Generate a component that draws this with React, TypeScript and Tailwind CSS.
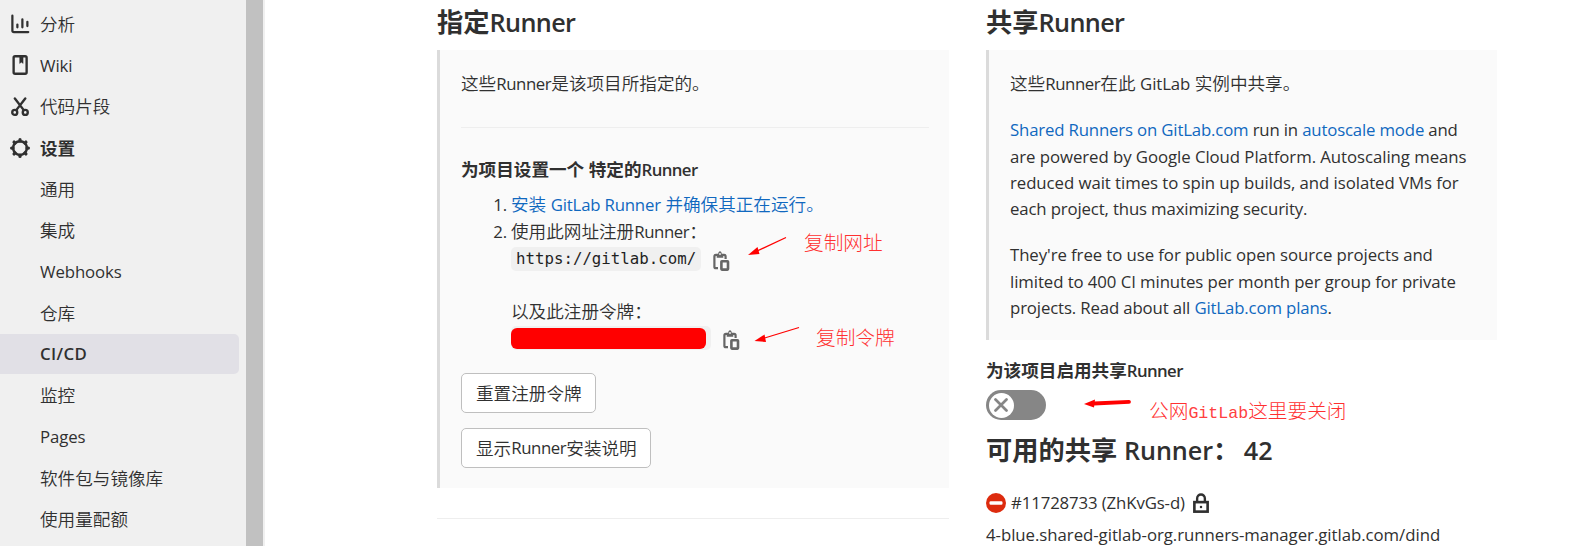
import React from 'react';

type Props = { children?: React.ReactNode; className?: string };

function Latin({ children, className = 'font-normal tracking-[-0.12px]' }: Props) {
  return <span className={`text-[16.8px] ${className}`}>{children}</span>;
}

function Link({ children }: Props) {
  return (
    <a href="#" className="text-[#1068bf]">
      {children}
    </a>
  );
}

function ChartIcon() {
  return (
    <svg viewBox="0 0 16 16" className="size-5" fill="none" stroke="currentColor" strokeWidth="1.8" strokeLinecap="round">
      <path d="M1.9 1.3v11.8a1.3 1.3 0 0 0 1.3 1.3h11.4" />
      <path d="M5.9 8.4v2.2M9.9 4.3v6.3M13.9 6.2v3.4" />
    </svg>
  );
}

function WikiIcon() {
  return (
    <svg viewBox="0 0 16 16" className="size-5" fill="none" stroke="currentColor" strokeWidth="1.9">
      <rect x="2.9" y="1" width="10.4" height="14" rx="1.2" />
      <path d="M7.7 1v5.8l1.4-1.1 1.4 1.1V1" fill="currentColor" strokeWidth="0.3" />
    </svg>
  );
}

function ScissorsIcon() {
  return (
    <svg viewBox="0 0 16 16" className="size-5" fill="none" stroke="currentColor" strokeWidth="1.9" strokeLinecap="round">
      <circle cx="3.8" cy="12.3" r="2" />
      <circle cx="12.2" cy="12.3" r="2" />
      <path d="M3.9 1.2 11 10.5M12.2 1.2 5 10.5" />
    </svg>
  );
}

const teeth = [0, 45, 90, 135, 180, 225, 270, 315];

function GearIcon() {
  return (
    <svg viewBox="0 0 16 16" className="size-5" fill="none" stroke="currentColor">
      <circle cx="8" cy="8" r="5.5" strokeWidth="2" />
      {teeth.map((a) => (
        <path key={a} d="M8 2.4V1.3" strokeWidth="2.6" strokeLinecap="round" transform={`rotate(${a} 8 8)`} />
      ))}
    </svg>
  );
}

function CopyIcon() {
  return (
    <svg viewBox="0 0 20 20" className="size-5" fill="none" stroke="#666" strokeWidth="2.2">
      <path d="M7 17.2H4.9a1.5 1.5 0 0 1-1.500-1.500V5.400A1.500 1.500 0 0 1 4.900 3.900h8.200a1.500 1.500 0 0 1 1.500 1.500V8" />
      <path d="M5.700 3h1.500C7.400 1.300 8 0.300 9 0.300s1.600 1 1.800 2.700h1.500v3.700H5.700z" fill="#666" stroke="none" />
      <circle cx="9" cy="3" r="0.900" fill="#fafafa" stroke="none" />
      <rect x="10.400" y="10.200" width="6.600" height="8.400" rx="0.500" strokeWidth="2.600" />
    </svg>
  );
}

function LockIcon() {
  return (
    <svg viewBox="0 0 16 16" className="size-5" fill="none" stroke="currentColor" strokeWidth="2.1">
      <rect x="2.7" y="7.3" width="10.6" height="7.6" />
      <path d="M4.900 7V4.300a3.100 3.100 0 0 1 6.200 0V7" strokeWidth="1.9" />
      <circle cx="8" cy="11.1" r="1" fill="currentColor" stroke="none" />
    </svg>
  );
}

const menu = [
  { label: '分析', Icon: ChartIcon },
  { label: 'Wiki', Icon: WikiIcon, latin: true },
  { label: '代码片段', Icon: ScissorsIcon },
  { label: '设置', Icon: GearIcon, bold: true },
  { label: '通用' },
  { label: '集成' },
  { label: 'Webhooks', latin: true },
  { label: '仓库' },
  { label: 'CI/CD', latin: true, active: true },
  { label: '监控' },
  { label: 'Pages', latin: true },
  { label: '软件包与镜像库' },
  { label: '使用量配额' },
];

function Sidebar() {
  return (
    <aside className="flex w-[265px] shrink-0 bg-[#f0f0f0]">
      <nav className="flex w-[246px] flex-col gap-[1.25px] pt-1 pr-[7px]">
        {menu.map(({ label, Icon, latin, bold, active }) => (
          <div
            key={label}
            className={`flex h-10 shrink-0 items-center pl-[10px] ${active ? 'rounded-r-[5px] bg-[#e1e0e6]' : ''} ${bold ? 'font-bold' : ''}`}
          >
            <span className="w-[30px]">{Icon && <Icon />}</span>
            {latin ? (
              <Latin className={active ? 'pt-px font-semibold tracking-[0.4px]' : 'pt-[1.5px] font-normal tracking-[-0.1px]'}>{label}</Latin>
            ) : (
              label
            )}
          </div>
        ))}
      </nav>
      <div className="w-[17px] bg-[#c1c1c1]" />
    </aside>
  );
}

function Heading({ cjk }: { cjk: string }) {
  return (
    <h4 className="flex h-[50px] items-center pb-1.5 text-[26.25px] font-bold">
      {cjk}
      <span className="text-[25.2px] font-semibold tracking-[-0.6px]">Runner</span>
    </h4>
  );
}

function Button({ children, className = '' }: Props) {
  return (
    <button className={`flex h-10 items-center rounded-[5px] border border-[#bfbfbf] bg-white pl-[14px] ${className}`}>
      {children}
    </button>
  );
}

function SpecificRunners() {
  return (
    <section className="w-[512px] shrink-0">
      <Heading cjk="指定" />
      <div className="h-[438px] border-l-[3px] border-[#dbdbdb] bg-[#fafafa] pt-[20px] pr-5 pl-[21px]">
        <p>
          这些<Latin className="font-normal tracking-[-0.4px]">Runner</Latin>是该项目所指定的。
        </p>
        <hr className="mt-[29.5px] border-[#eee]" />
        <h5 className="mt-[28px] font-bold">
          为项目设置一个 特定的<Latin className="font-semibold tracking-[-0.6px]">Runner</Latin>
        </h5>
        <ol className="mt-[8px]">
          <li className="flex">
            <span className="w-[50px] pr-[4px] text-right"><Latin>1.</Latin></span>
            <Link>
              安装 <Latin className="font-normal tracking-[-0.2px]">GitLab Runner</Latin> 并确保其正在运行。
            </Link>
          </li>
          <li className="flex">
            <span className="w-[50px] pr-[4px] text-right"><Latin>2.</Latin></span>
            <div>
              <div>
                使用此网址注册<Latin className="font-normal tracking-[-0.4px]">Runner</Latin>：
              </div>
              <div className="flex h-[27px] items-center">
                <code className="flex h-6 w-[190px] items-center rounded-[5px] bg-[#f0f0f0] pl-[5px] font-['DejaVu_Sans_Mono',monospace] text-[15.75px] font-normal text-[#1f1f1f]">
                  https://gitlab.com/
                </code>
                <span className="ml-[10px] pt-[3px]"><CopyIcon /></span>
              </div>
              <div className="mt-[25px]">以及此注册令牌：</div>
              <div className="flex h-[29px] items-center">
                <span className="flex h-6 w-[200px] items-center rounded-[5px] bg-[#f0f0f0]">
                  <span className="h-[21px] w-[195px] rounded-[6px] bg-[#ff0000]" />
                </span>
                <span className="ml-[10px] pt-[3px]"><CopyIcon /></span>
              </div>
            </div>
          </li>
        </ol>
        <div className="mt-[20px] flex flex-col gap-[15px]">
          <Button className="w-[135px]">重置注册令牌</Button>
          <Button className="w-[190px]">
            显示<Latin className="font-normal tracking-[-0.4px]">Runner</Latin>安装说明
          </Button>
        </div>
      </div>
      <hr className="mt-[30px] border-[#eee]" />
    </section>
  );
}

function SharedRunners() {
  return (
    <section className="w-[511px] shrink-0">
      <Heading cjk="共享" />
      <div className="h-[290px] border-l-[3px] border-[#dbdbdb] bg-[#fafafa] pt-[20px] pl-[21px] whitespace-nowrap">
        <p>
          这些<Latin className="font-normal tracking-[-0.4px]">Runner</Latin>在此 <Latin>GitLab</Latin> 实例中共享。
        </p>
        <p className="mt-5 text-[16.8px] font-normal tracking-[-0.06px]">
          <span className="tracking-[-0.17px]"><Link>Shared Runners on GitLab.com</Link> run in <Link>autoscale mode</Link> and</span><br />
          are powered by Google Cloud Platform. Autoscaling means<br />
          reduced wait times to spin up builds, and isolated VMs for<br />
          <span className="tracking-[-0.15px]">each project, thus maximizing security.</span>
        </p>
        <p className="mt-5 text-[16.8px] font-normal tracking-[-0.08px]">
          They're free to use for public open source projects and<br />
          limited to 400 CI minutes per month per group for private<br />
          <span className="tracking-[-0.14px]">projects. Read about all <Link>GitLab.com plans</Link>.</span>
        </p>
      </div>
      <div className="mt-[17px] font-bold">
        为该项目启用共享<Latin className="font-semibold tracking-[-0.6px]">Runner</Latin>
      </div>
      <div className="mt-[6px] flex h-[30px] w-[60px] items-center rounded-full bg-[#868686] pl-[2.5px]">
        <span className="flex size-[25px] items-center justify-center rounded-full bg-white">
          <svg viewBox="0 0 14 14" className="size-[14px]" stroke="#868686" strokeWidth="2.7" strokeLinecap="round">
            <path d="M1.5 1.5l11 11M12.5 1.5l-11 11" />
          </svg>
        </span>
      </div>
      <h4 className="mt-[11.5px] flex h-[36px] items-center text-[26.25px] font-bold whitespace-pre">
        可用的共享 <span className="text-[25.2px] font-semibold tracking-[-0.1px]">Runner</span>：
        <span className="-ml-0.5 text-[25.2px] font-semibold"> 42</span>
      </h4>
      <div className="mt-[21.5px] flex h-[27px] items-center">
        <svg viewBox="0 0 20 20" className="size-5">
          <circle cx="10" cy="10" r="10" fill="#dd2b0e" />
          <rect x="3.5" y="8.2" width="13" height="3.6" rx="1.2" fill="#fff" />
        </svg>
        <span className="ml-[5px] w-[180px]"><Latin>#11728733 (ZhKvGs-d)</Latin></span>
        <LockIcon />
      </div>
      <div className="mt-[5px] whitespace-nowrap">
        <Latin className="font-normal tracking-[-0.04px]">4-blue.shared-gitlab-org.runners-manager.gitlab.com/dind</Latin>
      </div>
    </section>
  );
}

function Note({ children, className = '' }: Props) {
  return <span className={`absolute text-[19.7px] leading-6 font-light whitespace-nowrap text-[#ff3030] ${className}`}>{children}</span>;
}

function Annotations() {
  return (
    <div className="pointer-events-none absolute inset-0">
      <svg viewBox="0 0 1581 546" className="absolute inset-0 h-[546px] w-[1581px]" fill="#f00" stroke="#f00">
        <path d="M786 237.5 755 252" strokeWidth="1.3" />
        <path d="M748 255 757.5 247 759.5 254z" stroke="none" />
        <path d="M799 327.5 763 338.5" strokeWidth="1.3" />
        <path d="M754.5 341 764.5 334.5 766 342z" stroke="none" />
        <path d="M1129 401.8 1094 403.5" strokeWidth="3.8" strokeLinecap="round" />
        <path d="M1084 404 1095 399.5 1094 407.5z" stroke="none" />
      </svg>
      <Note className="top-[231px] left-[804px]">复制网址</Note>
      <Note className="top-[326px] left-[816px]">复制令牌</Note>
      <Note className="top-[399px] left-[1149px]">
        公网<span className="font-['Liberation_Mono',monospace] text-[16.6px] text-[#ff4040]">GitLab</span>这里要关闭
      </Note>
    </div>
  );
}

export default function App() {
  return (
    <div className="relative flex h-[546px] w-[1581px] overflow-hidden bg-white font-['Open_Sans','Noto_Sans_CJK_SC',sans-serif] text-[17.6px] leading-[26.25px] font-[350] text-[#303030]">
      <Sidebar />
      <main className="flex gap-[37px] pl-[172px]">
        <SpecificRunners />
        <SharedRunners />
      </main>
      <Annotations />
    </div>
  );
}
